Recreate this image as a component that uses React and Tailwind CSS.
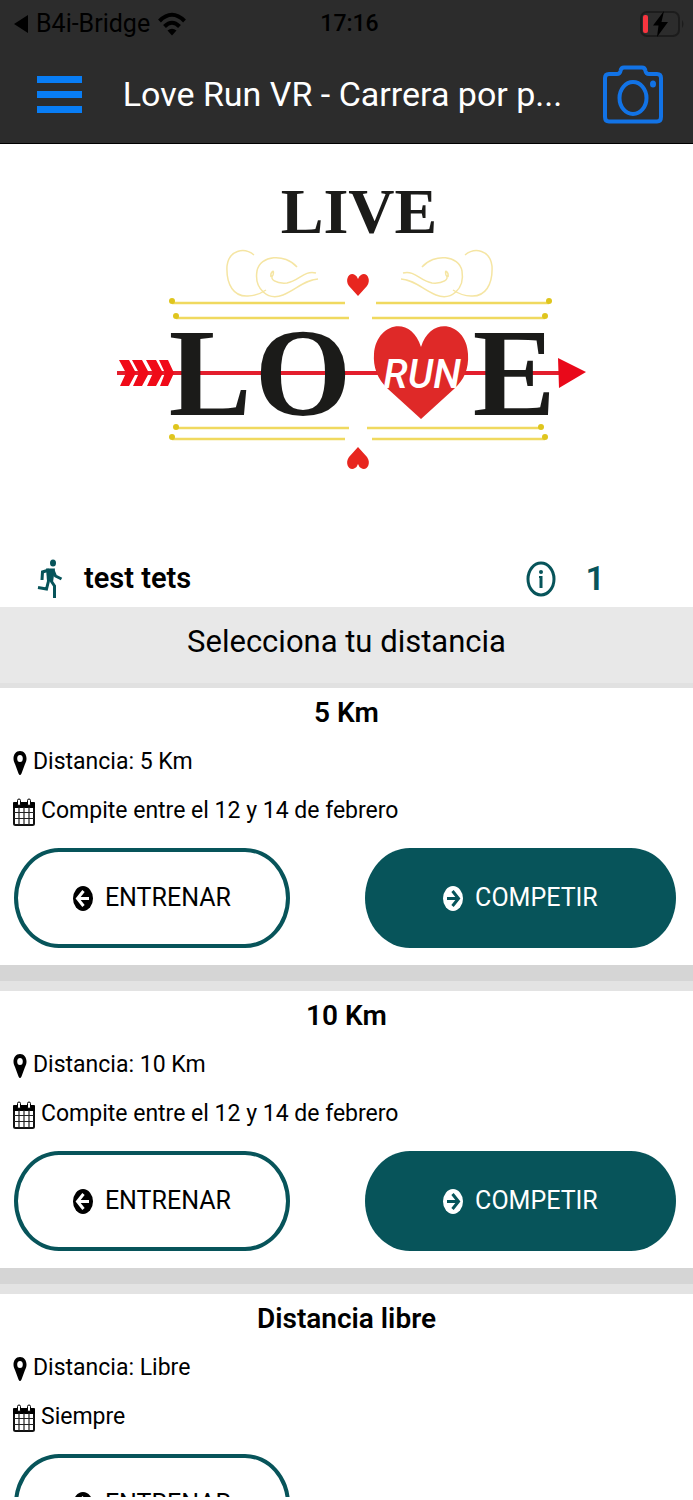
import { useState } from "react"

const races = [
    { id: "5k", title: "5 Km", distance: "5 Km", dates: "Compite entre el 12 y 14 de febrero" },
    { id: "10k", title: "10 Km", distance: "10 Km", dates: "Compite entre el 12 y 14 de febrero" },
    { id: "free", title: "Distancia libre", distance: "Libre", dates: "Siempre", trainOnly: true }
]

function WifiIcon() {
    return (
        <svg viewBox="0 0 28 24" className="h-6 w-7" fill="none" stroke="black" strokeWidth="4">
            <path d="M1.500 9 Q14 -3.500 26.500 9" />
            <path d="M6.500 14.500 Q14 7 21.500 14.500" />
            <path d="M14 23.500 L9.500 18.500 Q14 15 18.500 18.500 Z" fill="black" stroke="none" />
        </svg>
    )
}

function BatteryIcon() {
    return (
        <svg viewBox="0 0 46 28" className="h-7 w-[46px]">
            <rect x="2" y="2" width="38" height="24" rx="6" fill="none" stroke="#1c1c1c" strokeWidth="2" />
            <path d="M43 10 q3 4 0 8 z" fill="#1c1c1c" />
            <rect x="4" y="5" width="5" height="18" rx="2" fill="#f8353f" />
            <path d="M25 1 L14 15.500 H19.500 L18 27 L29 12 H22.500 Z" fill="black" />
        </svg>
    )
}

function CameraIcon() {
    return (
        <svg viewBox="0 0 60 60" className="h-[60px] w-[60px]" fill="none" stroke="#1273e6" strokeWidth="4">
            <path d="M6 9 H14 Q17 9 17.500 6 Q18 2.500 21 2.500 H39 Q42 2.500 42.500 6 Q43 9 46 9 H54 Q58 9 58 13 V52 Q58 56.500 54 56.500 H6 Q2 56.500 2 52 V13 Q2 9 6 9 Z" />
            <ellipse cx="30" cy="33" rx="13.500" ry="16" />
            <ellipse cx="50" cy="19" rx="3" ry="3.500" fill="#1273e6" stroke="none" />
        </svg>
    )
}

function RunnerIcon() {
    return (
        <svg viewBox="0 0 26 40" className="h-10 w-[26px]" fill="none" stroke="#07545a" strokeWidth="3">
            <ellipse cx="16" cy="4" rx="3" ry="3.500" fill="#07545a" stroke="none" />
            <path d="M9 9.500 L18 9.500 L16 23 L10 22 Z" fill="#07545a" stroke="none" />
            <path d="M12 11 L5.500 13 L5 21" />
            <path d="M16 11 L18.500 17 L24.500 20" />
            <path d="M13.500 21 L17.500 27 V39" />
            <path d="M11.500 22 L9.500 30 L1 28.500" />
        </svg>
    )
}

function InfoIcon() {
    return (
        <svg viewBox="0 0 30 36" className="h-9 w-[30px]">
            <ellipse cx="15" cy="18" rx="13" ry="16" fill="none" stroke="#07545a" strokeWidth="3" />
            <ellipse cx="15" cy="11" rx="2" ry="2" fill="#07545a" />
            <path d="M13 15 H16.500 V27 H13.500 V17 H13 Z" fill="#07545a" />
        </svg>
    )
}

function PinIcon() {
    return (
        <svg viewBox="0 0 14 26" className="h-[26px] w-[14px]">
            <path
                d="M7 1 C11 1 13.500 4.500 13.500 8.500 C13.500 10.500 13 12 12 14 L8.500 23.500 Q7 26.500 5.500 23.500 L2 14 C1 12 0.500 10.500 0.500 8.500 C0.500 4.500 3 1 7 1 Z M7 5 A2.800 3.500 0 1 0 7 12 A2.800 3.500 0 1 0 7 5 Z"
                fillRule="evenodd"
            />
        </svg>
    )
}

function CalendarIcon() {
    return (
        <svg viewBox="0 0 22 28" className="h-7 w-[22px]">
            <rect x="1" y="5" width="20" height="22" rx="1.500" fill="white" stroke="#111" strokeWidth="2" />
            <rect x="0" y="4" width="22" height="6" rx="1" />
            <path d="M6 9 V27 M11 9 V27 M16 9 V27 M1 14.500 H21 M1 20.500 H21" stroke="#222" strokeWidth="1.200" />
            <rect x="4.500" y="1" width="3" height="6.500" rx="1.500" fill="white" stroke="black" />
            <rect x="14.500" y="1" width="3" height="6.500" rx="1.500" fill="white" stroke="black" />
        </svg>
    )
}

function ArrowCircle({ left, disc, arrow }) {
    return (
        <svg viewBox="0 0 20 25" className="h-[25px] w-5">
            <ellipse cx="10" cy="12.500" rx="10" ry="12.500" fill={disc} />
            <path
                d={
                    left
                        ? "M10.500 5 L4.500 12.500 L10.500 20 M5 12.500 H16"
                        : "M9.500 5 L15.500 12.500 L9.500 20 M15 12.500 H4"
                }
                fill="none"
                stroke={arrow}
                strokeWidth="3"
            />
        </svg>
    )
}

function Flourish() {
    return (
        <g fill="none" stroke="#f5e5a3" strokeWidth="1.500">
            <path d="M254 255 C244 247 229 250 227 266 C226 285 234 297 248 296 C254 296 260 294 266 290" />
            <path d="M297 267 C285 253 260 255 257 271 C254 289 268 301 283 295 C296 290 304 280 318 279" />
            <path d="M271 277 C270 272 275 268 273 275 C269 279 276 284 287 283 C299 281 304 270 316 273" />
        </g>
    )
}

function Heart({ fill }) {
    return <path d="M0 20 L-9 10 C-14 3 -8 -5 -3 -1 Q-1 0 0 3 Q1 0 3 -1 C8 -5 14 3 9 10 Z" fill={fill} />
}

function Logo() {
    return (
        <svg viewBox="0 144 693 406" className="block w-full" role="img" aria-label="Live Love Run">
            <text x="359" y="233" textAnchor="middle" className="font-['Liberation_Serif',serif] text-[64px] font-bold" fill="#1b1b19">
                LIVE
            </text>

            <Flourish />
            <g transform="translate(719 0) scale(-1 1)">
                <Flourish />
            </g>
            <g transform="translate(358 276)">
                <Heart fill="#e8261f" />
            </g>
            <g transform="translate(358 467) scale(1 -1)">
                <Heart fill="#e8261f" />
            </g>

            <g stroke="#f0d95f" strokeWidth="2.500">
                <path d="M172 303 H345 M376 303 H549" />
                <path d="M176 318 H349 M372 318 H545" />
                <path d="M176 428 H349 M367 428 H541" />
                <path d="M172 439 H345 M372 439 H545" />
            </g>
            <g fill="#dfc51d">
                <circle cx="172" cy="301" r="3" />
                <circle cx="549" cy="301" r="3" />
                <circle cx="176" cy="316" r="3" />
                <circle cx="545" cy="316" r="3" />
                <circle cx="176" cy="427" r="3" />
                <circle cx="541" cy="427" r="3" />
                <circle cx="172" cy="437" r="3" />
                <circle cx="545" cy="437" r="3" />
            </g>

            {/* arrow */}
            <path d="M117 373 H562" stroke="#e31e2d" strokeWidth="4" />
            <path d="M558 358 L586 372 L559 388 Z" fill="#e9091a" />
            <g fill="#f00a18">
                <path d="M119 360 H129 L136 373 L129 386 H120 L126 373 Z" />
                <path d="M132 360 H142 L149 373 L142 386 H133 L139 373 Z" />
                <path d="M146 360 H156 L163 373 L156 386 H147 L153 373 Z" />
                <path d="M159 360 H168 L174 373 L168 386 H160 L165 373 Z" />
            </g>

            <g className="font-['Liberation_Serif',serif] text-[124px] font-bold" fill="#1b1b19">
                <text x="210" y="415" textAnchor="middle">L</text>
                <text x="303" y="415" textAnchor="middle">O</text>
                <text x="514" y="415" textAnchor="middle">E</text>
            </g>

            <path
                d="M421 419 L388 389 C377 379 373 366 374 354 C376 323 411 314 421 347 C431 314 467 323 468 354 C469 369 464 380 454 389 Z"
                fill="#df2928"
            />
            <text
                x="422"
                y="388"
                textAnchor="middle"
                className="font-[Roboto,sans-serif] text-[40px] font-medium italic"
                fill="white"
            >
                RUN
            </text>
        </svg>
    )
}

function RaceCard({ race }) {
    return (
        <section className="shrink-0">
            <div className="pb-[17px]">
                <h2 className="text-center text-[28px] leading-[50px] font-semibold">{race.title}</h2>
                <p className="flex h-[49px] items-center gap-[6px] px-[13px]">
                    <PinIcon />
                    Distancia: {race.distance}
                </p>
                <p className="flex h-[49px] items-center gap-[6px] px-[13px]">
                    <CalendarIcon />
                    {race.dates}
                </p>

                <div className="mt-3 flex justify-between pr-[17px] pl-[14px] text-[25px]">
                    <button className="flex h-[100px] w-5/12 items-center justify-center gap-3 rounded-[45px/50px] border-4 border-[#07545a]">
                        <ArrowCircle left disc="black" arrow="white" />
                        ENTRENAR
                    </button>
                    {!race.trainOnly && (
                        <button className="flex h-[100px] w-[47%] items-center justify-center gap-3 rounded-[45px/50px] bg-[#07545a] text-white">
                            <ArrowCircle disc="white" arrow="#07545a" />
                            COMPETIR
                        </button>
                    )}
                </div>
            </div>
            <div className="h-4 bg-[#d5d5d5]" />
            <div className="h-[10px] bg-[#e3e3e3]" />
        </section>
    )
}

export default function App() {
    const [open, setOpen] = useState(false)

    return (
        <div className="flex h-screen flex-col bg-white pb-[3px] font-[Roboto,sans-serif] text-[23px] text-black">
            <header className="shrink-0 border-b border-black bg-[#2c2c2c]">
                <div className="grid h-12 grid-cols-[1fr_auto_1fr] items-center pr-2 pl-[14px]">
                    <div className="flex items-center gap-2 text-[25px]">
                        <svg viewBox="0 0 14 18" className="h-[18px] w-[14px]">
                            <path d="M14 0 V18 L0 9 Z" />
                        </svg>
                        <span>B4i-Bridge</span>
                        <WifiIcon />
                    </div>
                    <span className="font-medium">17:16</span>
                    <div className="flex justify-end">
                        <BatteryIcon />
                    </div>
                </div>

                <div className="flex h-[95px] items-center justify-between pr-[30px] pb-[2px] pl-[37px]">
                    <button
                        aria-label="Menú"
                        aria-expanded={open}
                        onClick={() => setOpen(!open)}
                        className="flex w-[45px] shrink-0 flex-col gap-2"
                    >
                        <span className="h-[7px] w-full bg-[#087df5]" />
                        <span className="h-[7px] w-full bg-[#087df5]" />
                        <span className="h-[7px] w-full bg-[#087df5]" />
                    </button>
                    <h1 className="text-[34px] whitespace-nowrap text-white">
                        Love Run VR - Carrera por p...
                    </h1>
                    <button aria-label="Cámara" className="shrink-0">
                        <CameraIcon />
                    </button>
                </div>
            </header>

            <main className="flex min-h-0 flex-1 flex-col overflow-hidden">
                <div className="shrink-0">
                    <Logo />
                </div>

                <div className="flex h-[57px] shrink-0 items-center pr-[88px] pl-[37px]">
                    <RunnerIcon />
                    <span className="ml-[21px] flex-1 text-[29px] font-semibold">test tets</span>
                    <button aria-label="Información">
                        <InfoIcon />
                    </button>
                    <span className="ml-[30px] text-[34px] font-semibold text-[#07545a]">1</span>
                </div>

                <div className="shrink-0 border-b-5 border-[#e1e1e1] bg-[#e8e8e8] pb-[6px] text-center text-[31px] leading-[70px]">
                    Selecciona tu distancia
                </div>

                {races.map((race) => (
                    <RaceCard key={race.id} race={race} />
                ))}
            </main>
        </div>
    )
}
